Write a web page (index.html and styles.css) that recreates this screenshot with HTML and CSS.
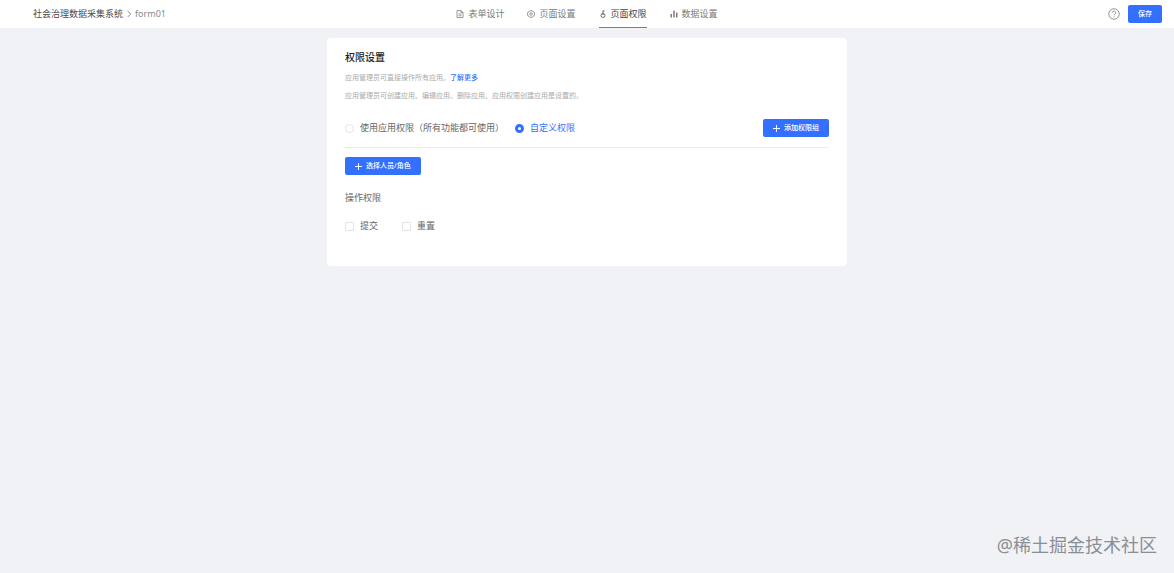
FILE: index.html
```html
<!DOCTYPE html>
<html lang="zh-CN">
<head>
<meta charset="utf-8">
<meta name="viewport" content="width=device-width, initial-scale=1">
<title>页面权限</title>
<link rel="stylesheet" href="styles.css">
</head>
<body>
<header class="topbar">
  <nav class="crumbs" aria-label="面包屑">
    <a class="crumb-root" href="#">社会治理数据采集系统</a>
    <svg class="chevron" viewBox="0 0 6 8" aria-hidden="true"><path d="M1.5 .8 4.7 4 1.5 7.2"/></svg>
    <span>form01</span>
  </nav>
  <nav class="tabs" aria-label="页面导航">
    <a class="tab" href="#">
      <svg class="icon" viewBox="0 0 16 16" aria-hidden="true"><path d="M2 1h8l4 4v10H2zM10 1v4h4M5 8h6M5 11.5h6"/></svg>
      表单设计</a>
    <a class="tab" href="#">
      <svg class="icon" viewBox="0 0 16 16" aria-hidden="true"><path d="M5.500 1.500h5l1.200 2 2.600.8L15.500 8l-1.200 3.700-2.600.8-1.200 2h-5l-1.200-2-2.600-.8L.5 8l1.200-3.700 2.600-.8z"/><circle cx="8" cy="8" r="2.500"/></svg>
      页面设置</a>
    <a class="tab active" href="#" aria-current="page">
      <svg class="icon" viewBox="0 0 16 16" aria-hidden="true"><circle cx="8" cy="11" r="4"/><path d="M8 10V1M8 2h3"/></svg>
      页面权限</a>
    <a class="tab" href="#">
      <svg class="icon bars" viewBox="0 0 16 16" aria-hidden="true"><path d="M2.500 15V8M8 15V1M13.500 15V5"/></svg>
      数据设置</a>
  </nav>
  <div class="actions">
    <button class="help" type="button" aria-label="帮助">
      <svg viewBox="0 0 16 16" aria-hidden="true"><circle cx="8" cy="8" r="7"/><path d="M5.800 6.300a2.200 2.200 0 1 1 3.200 2c-.7.400-1 .8-1 1.600M8 11.200v1.400"/></svg>
    </button>
    <button class="btn save" type="button">保存</button>
  </div>
</header>
<main class="card">
  <h1 class="title">权限设置</h1>
  <p class="desc">应用管理员可直接操作所有应用。<a href="#">了解更多</a></p>
  <p class="desc">应用管理员可创建应用、编辑应用、删除应用、应用权限创建应用是设置的。</p>
  <div class="mode-row">
    <label class="option"><input class="radio" type="radio" name="mode">使用应用权限（所有功能都可使用）</label>
    <label class="option"><input class="radio" type="radio" name="mode" checked>自定义权限</label>
    <button class="btn add" type="button"><svg class="plus" viewBox="0 0 7 7" aria-hidden="true"><path d="M3.500 0v7M0 3.500h7"/></svg>添加权限组</button>
  </div>
  <button class="btn pick" type="button"><svg class="plus" viewBox="0 0 7 7" aria-hidden="true"><path d="M3.500 0v7M0 3.500h7"/></svg>选择人员/角色</button>
  <fieldset class="ops">
    <legend>操作权限</legend>
    <div class="checks">
      <label class="option"><input class="check" type="checkbox">提交</label>
      <label class="option"><input class="check" type="checkbox">重置</label>
    </div>
  </fieldset>
</main>
<footer class="watermark">@稀土掘金技术社区</footer>
</body>
</html>
```
FILE: styles.css
```css
* { box-sizing: border-box; }

body {
  margin: 0;
  min-height: 100vh;
  display: flex;
  flex-direction: column;
  background: #f0f2f5;
  color: #666;
  font: 9px/18px "Noto Sans", "Noto Sans CJK SC", sans-serif;
}

a { color: inherit; text-decoration: none; }

button, input { font: inherit; margin: 0; }

svg {
  fill: none;
  stroke: currentColor;
  flex: none;
}

.topbar {
  display: grid;
  grid-template-columns: 1fr auto 1fr;
  height: 28px;
  padding: 0 12px 0 33px;
  background: #fff;
}

.crumbs {
  display: flex;
  align-items: center;
  gap: 3px;
  color: #8a8a8a;
}

.crumb-root { color: #4a4a4a; }

.chevron { width: 6px; height: 8px; }

.tabs {
  display: flex;
  gap: 23px;
  margin-right: 21px;
}

.tab {
  display: flex;
  align-items: center;
  gap: 4px;
  padding-top: 1px;
  color: #7a7a7a;
  border-bottom: 1px solid transparent;
}

.tab.active {
  color: #444;
  border-bottom: 1px solid #2f8fe8;
}

.icon { width: 8px; height: 8px; stroke-width: 1.5; }

.bars { stroke-width: 3; }

.actions {
  display: flex;
  justify-content: flex-end;
  align-items: center;
  gap: 8px;
}

.help {
  display: flex;
  padding: 0;
  border: 0;
  background: none;
  color: #777;
}

.help svg { width: 12px; height: 12px; }

.btn {
  display: flex;
  align-items: center;
  justify-content: center;
  gap: 4px;
  height: 18px;
  padding: 0 10px;
  border: 0;
  border-radius: 2px;
  background: #3370ff;
  color: #fff;
  font-size: 7px;
  font-weight: 500;
}

.plus { width: 7px; height: 7px; }

.card {
  width: 100%;
  max-width: 520px;
  margin: 10px auto 0;
  padding: 10px 18px 31px;
  border-radius: 4px;
  background: #fff;
}

.title {
  margin: 0 0 3px;
  color: #222;
  font-size: 10px;
  font-weight: 500;
  line-height: 18px;
}

.desc {
  margin: 0;
  color: #aaa;
  font-size: 7px;
}

.desc a { color: #3370ff; font-weight: 500; }

.mode-row {
  display: flex;
  align-items: center;
  gap: 11px;
  padding: 14px 0 10px;
  border-bottom: 1px solid #ebecee;
  margin-bottom: 9px;
}

.option {
  display: flex;
  align-items: center;
  gap: 6px;
}

.option:has(.radio:checked) { color: #3370ff; }

.radio, .check {
  appearance: none;
  width: 9px;
  height: 9px;
  border: 1px solid #e2e3e6;
  background: #fff;
}

.radio { border-radius: 50%; }

.radio:checked { border: 3px solid #3370ff; }

.check { border-radius: 1px; }

.add { margin-left: auto; }

.ops {
  margin: 14px 0 0;
  padding: 0;
  border: 0;
}

.ops legend { padding: 0; }

.checks {
  display: flex;
  gap: 24px;
  padding-top: 10px;
}

.watermark {
  margin-top: auto;
  padding: 0 17px 15px;
  color: #8b8e94;
  font-size: 18px;
  line-height: 26px;
  text-align: right;
}
```
